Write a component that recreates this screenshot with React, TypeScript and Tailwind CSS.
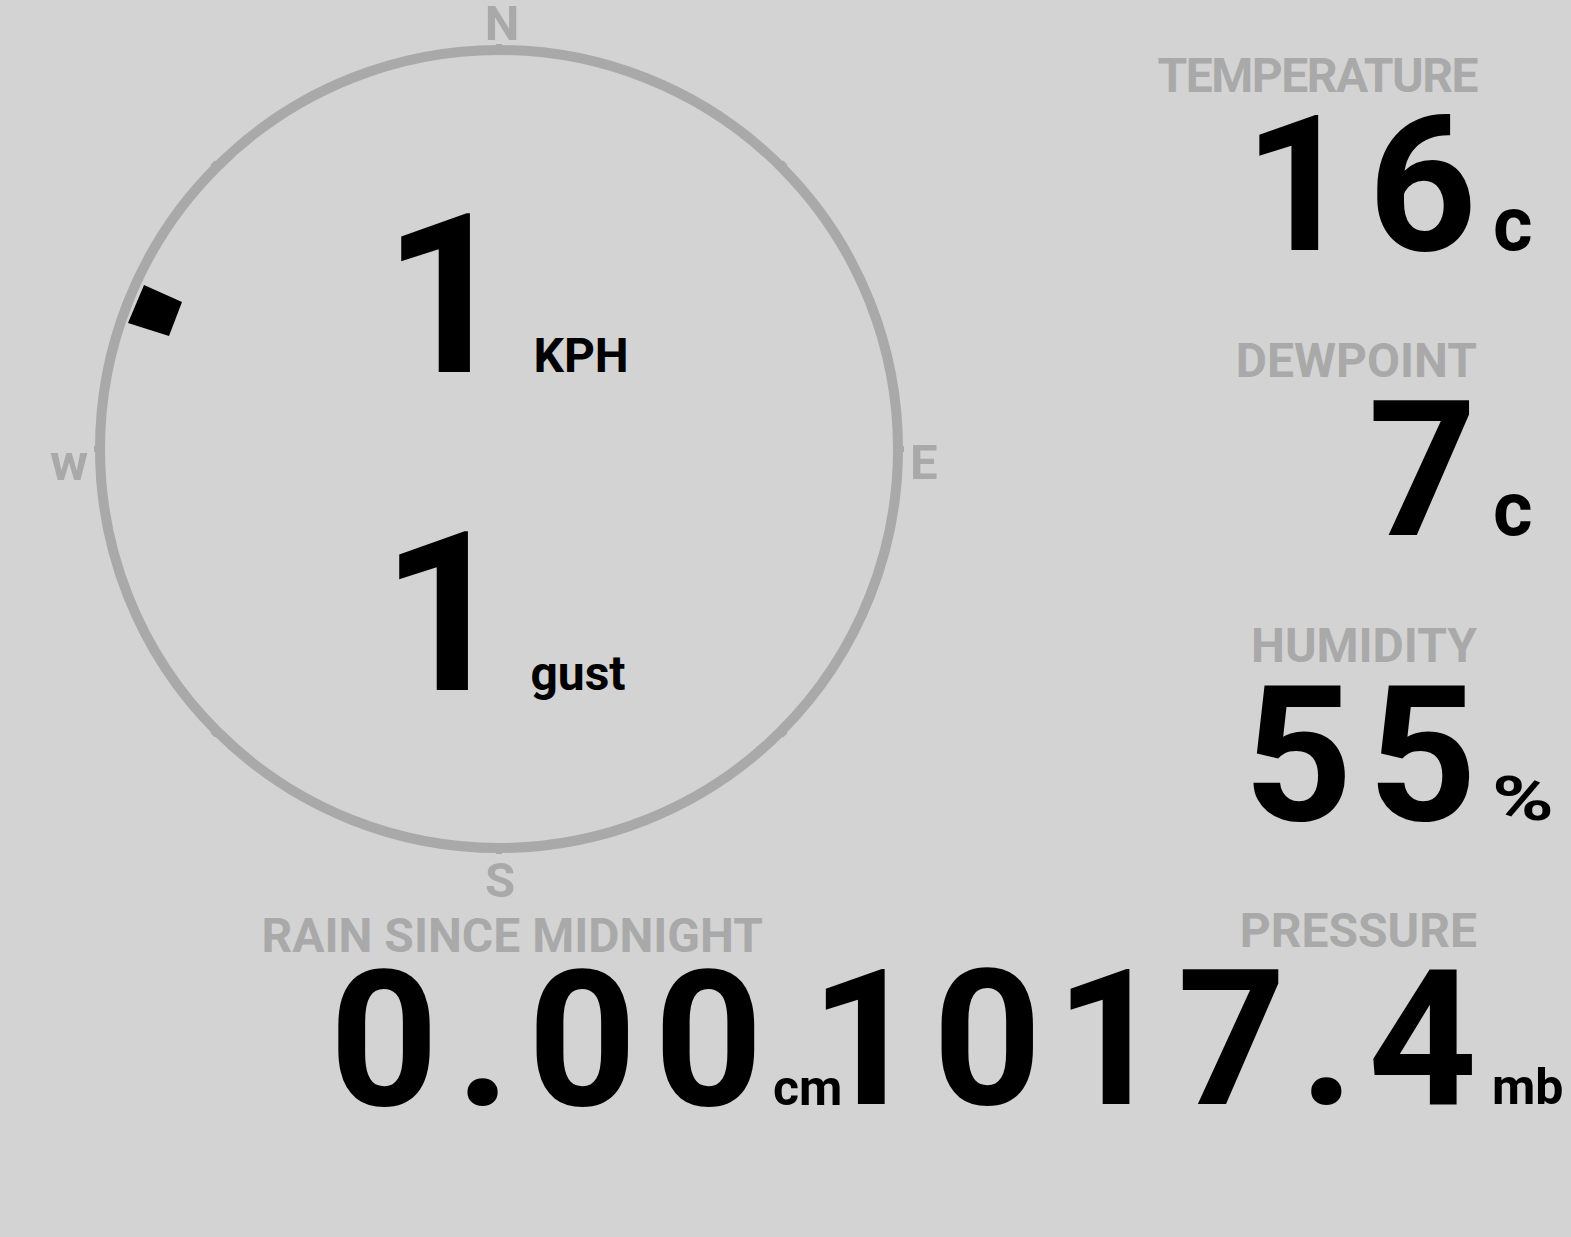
import React from "react";

const CX = 499;
const CY = 449;
const R = 399;

function Compass() {
  const ticks = [0, 45, 90, 135, 180, 225, 270, 315].map((deg) => {
    const a = (deg * Math.PI) / 180;
    const s = Math.sin(a);
    const c = Math.cos(a);
    return {
      x1: CX + s * (R - 1),
      y1: CY - c * (R - 1),
      x2: CX + s * (R + 6),
      y2: CY - c * (R + 6),
    };
  });
  return (
    <div className="relative w-[1000px] h-[907px] shrink-0">
      <svg
        className="absolute inset-0"
        width={1000}
        height={907}
        viewBox="0 0 1000 907"
      >
        <circle cx={CX} cy={CY} r={R} fill="none" stroke="#a9a9a9" strokeWidth={10} />
        {ticks.map((t, i) => (
          <line
            key={i}
            x1={t.x1}
            y1={t.y1}
            x2={t.x2}
            y2={t.y2}
            stroke="#a9a9a9"
            strokeWidth={6}
          />
        ))}
        <polygon points="144,285 182,302 169,336 128,323" fill="#000" />
      </svg>

      <span className="absolute left-[502px] top-[4px] -translate-x-1/2 text-[49px] leading-[40px] text-[#a9a9a9]">
        N
      </span>
      <span className="absolute left-[910px] top-[438px] text-[49px] leading-none text-[#a9a9a9]">
        E
      </span>
      <span className="absolute left-[500px] top-[856px] -translate-x-1/2 text-[49px] leading-none text-[#a9a9a9]">
        S
      </span>
      <span className="absolute left-[50px] top-[437px] text-[52px] leading-none text-[#a9a9a9]">
        w
      </span>

      <div className="relative flex flex-col pt-[185px]">
        <div className="flex items-baseline pl-[383px]">
          <span className="text-[222px] leading-none">1</span>
          <span className="ml-[23px] text-[48px] leading-none">KPH</span>
        </div>
        <div className="flex items-baseline pl-[381px] mt-[96px]">
          <span className="text-[222px] leading-none">1</span>
          <span className="ml-[22px] text-[48px] leading-none">gust</span>
        </div>
      </div>
    </div>
  );
}

function Reading({
  label,
  labelClass = "",
  value,
  children,
}: {
  label: string;
  labelClass?: string;
  value: string;
  children: React.ReactNode;
}) {
  return (
    <div className="flex flex-col items-end">
      <div className={`mr-[94px] text-[48px] leading-[28px] text-[#a9a9a9] ${labelClass}`}>{label}</div>
      <div className="flex items-baseline">
        <span className="text-[190px] leading-none tracking-[0.08em] -mr-[0.08em]">{value}</span>
        {children}
      </div>
    </div>
  );
}

export default function App() {
  return (
    <div className="w-full h-[1237px] overflow-hidden bg-[#d3d3d3] font-['Roboto',sans-serif] font-bold text-black">
      <div className="flex">
        <Compass />
        <div className="flex-1 min-w-0 flex flex-col items-end pt-[62px] gap-[67px]">
          <Reading label="TEMPERATURE" labelClass="tracking-[-1.5px]" value="16">
            <span className="w-[94px] pl-[16px] text-[76px] leading-none">c</span>
          </Reading>
          <Reading label="DEWPOINT" value="7">
            <span className="w-[94px] pl-[16px] text-[76px] leading-none">c</span>
          </Reading>
          <Reading label="HUMIDITY" value="55">
            <span className="w-[94px] pl-[15px] text-[62px] leading-none">
              <span className="inline-block origin-left scale-x-[1.35]">%</span>
            </span>
          </Reading>
        </div>
      </div>

      <div className="flex items-start">
        <div className="w-[836px] shrink-0 flex flex-col items-end">
          <div className="mt-[15px] mr-[73px] text-[48px] leading-[28px] text-[#a9a9a9]">
            RAIN SINCE MIDNIGHT
          </div>
          <div className="flex items-baseline -mt-[5px]">
            <span className="text-[190px] leading-none tracking-[0.09em] -mr-[0.09em]">0.00</span>
            <span className="w-[73px] pl-[10px] text-[50px] leading-none">cm</span>
          </div>
        </div>
        <div className="flex-1 min-w-0 flex flex-col items-end">
          <div className="mt-[10px] mr-[94px] text-[48px] leading-[28px] text-[#a9a9a9]">PRESSURE</div>
          <div className="flex items-baseline -mt-[1px]">
            <span className="text-[190px] leading-none tracking-[0.07em] -mr-[0.07em]">1017.4</span>
            <span className="w-[94px] pl-[15px] text-[50px] leading-none">mb</span>
          </div>
        </div>
      </div>
    </div>
  );
}
